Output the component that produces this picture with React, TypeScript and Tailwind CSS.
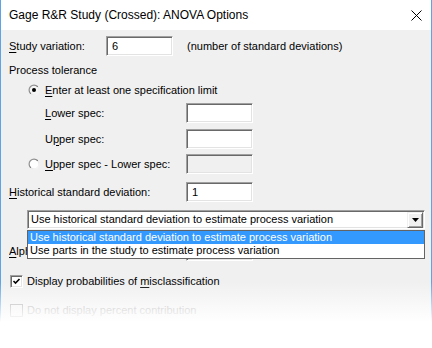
import React from "react";

const font = { fontFamily: '"Liberation Sans", Arial, sans-serif' };

function U({ children }: { children: React.ReactNode }) {
  return <span className="underline underline-offset-[2px] decoration-[1px]">{children}</span>;
}

function Box({ value, disabled }: { value?: string; disabled?: boolean }) {
  return (
    <div
      className={`w-[67px] h-[20px] shrink-0 border border-t-[#a0a0a0] border-l-[#a0a0a0] border-b-white border-r-white shadow-[inset_1px_1px_0_#696969,inset_-1px_-1px_0_#e3e3e3] flex items-center pl-[5px] text-[11px] text-black ${
        disabled ? "bg-[#f0f0f0]" : "bg-white"
      }`}
    >
      {value}
    </div>
  );
}

function Radio({ checked }: { checked?: boolean }) {
  return (
    <svg width="12" height="12" viewBox="0 0 12 12" className="shrink-0">
      <defs>
        <linearGradient id={checked ? "rg1" : "rg2"} x1="0" y1="0" x2="1" y2="1">
          <stop offset="0" stopColor="#a0a0a0" />
          <stop offset="0.5" stopColor="#808080" />
          <stop offset="0.51" stopColor="#e3e3e3" />
          <stop offset="1" stopColor="#ffffff" />
        </linearGradient>
      </defs>
      <circle cx="6" cy="6" r="5.5" fill={`url(#${checked ? "rg1" : "rg2"})`} />
      <circle cx="6" cy="6" r="4.3" fill={checked ? "#f4f4f4" : "#ffffff"} />
      {checked && <circle cx="6" cy="6" r="2" fill="#000" />}
    </svg>
  );
}

function Check() {
  return (
    <div className="w-[13px] h-[13px] bg-white border border-t-[#a0a0a0] border-l-[#a0a0a0] border-b-white border-r-white shadow-[inset_1px_1px_0_#696969,inset_-1px_-1px_0_#e3e3e3] flex items-center justify-center shrink-0">
      <svg width="9" height="9" viewBox="0 0 9 9">
        <path d="M1.5 4 L3.5 6 L7.5 2" stroke="#000" strokeWidth="1.6" fill="none" />
      </svg>
    </div>
  );
}

export default function App() {
  return (
    <div className="relative w-[432px] h-[348px] bg-white overflow-hidden text-black" style={font}>
      <div className="w-[432px] h-[348px] border-x border-[#5ea3e4] flex flex-col">
        {/* Title bar */}
        <div className="h-[30px] bg-white flex items-center justify-between pl-[8px] pr-[9px] shrink-0">
          <span className="text-[12px] leading-none">Gage R&amp;R Study (Crossed): ANOVA Options</span>
          <svg width="11" height="11" viewBox="0 0 11 11" className="mr-[0px]">
            <path d="M0.5 0.5 L10.5 10.5 M10.5 0.5 L0.5 10.5" stroke="#000" strokeWidth="1" />
          </svg>
        </div>
        {/* Body */}
        <div className="flex-1 bg-[#f0f0f0] text-[11px] pl-[8px] flex flex-col">
          <div className="mt-[6px] h-[20px] flex items-center">
            <span className="w-[97px]">
              <U>S</U>tudy variation:
            </span>
            <Box value="6" />
            <span className="ml-[14px]">(number of standard deviations)</span>
          </div>
          <div className="mt-[7px] h-[14px] flex items-center">Process tolerance</div>
          <div className="mt-[6px] h-[14px] flex items-center pl-[19px]">
            <Radio checked />
            <span className="ml-[5px]">
              <U>E</U>nter at least one specification limit
            </span>
          </div>
          <div className="mt-[6px] h-[20px] flex items-center pl-[36px]">
            <span className="w-[141px]">
              <U>L</U>ower spec:
            </span>
            <Box />
          </div>
          <div className="mt-[6px] h-[20px] flex items-center pl-[36px]">
            <span className="w-[141px]">
              U<U>p</U>per spec:
            </span>
            <Box />
          </div>
          <div className="mt-[5px] h-[20px] flex items-center pl-[19px]">
            <Radio />
            <span className="ml-[5px] w-[141px]">
              <U>U</U>pper spec - Lower spec:
            </span>
            <Box disabled />
          </div>
          <div className="mt-[8px] h-[20px] flex items-center">
            <span className="w-[177px]">
              <U>H</U>istorical standard deviation:
            </span>
            <Box value="1" />
          </div>
          <div className="mt-[8px] ml-[18px] w-[398px] h-[19px] bg-white border border-t-[#a0a0a0] border-l-[#a0a0a0] border-b-white border-r-white shadow-[inset_1px_1px_0_#696969,inset_-1px_-1px_0_#e3e3e3] flex items-center justify-between pl-[3px] pr-[1px]">
            <span>Use historical standard deviation to estimate process variation</span>
            <div className="w-[16px] h-[16px] bg-[#f0f0f0] border border-t-[#f0f0f0] border-l-[#f0f0f0] border-b-[#696969] border-r-[#696969] shadow-[inset_1px_1px_0_#ffffff,inset_-1px_-1px_0_#a0a0a0] flex items-center justify-center">
              <svg width="7" height="4" viewBox="0 0 7 4">
                <path d="M0 0 H7 L3.5 4 Z" fill="#000" />
              </svg>
            </div>
          </div>
          <div className="mt-[12px] h-[20px] flex items-center">
            <span className="w-[18px] overflow-hidden whitespace-nowrap">
              <U>A</U>lph
            </span>
            <span className="w-[159px]" />
            <Box />
          </div>
          <div className="mt-[12px] h-[16px] flex items-center pl-[1px]">
            <Check />
            <span className="ml-[4px]">
              Display probabilities of <U>m</U>isclassification
            </span>
          </div>
          <div className="mt-[13px] h-[16px] flex items-center pl-[1px] text-[#a0a0a0]">
            <div className="w-[13px] h-[13px] bg-[#f0f0f0] border border-[#a0a0a0]" />
            <span className="ml-[4px]">Do not display percent contribution</span>
          </div>
        </div>
      </div>

      {/* Dropdown list (open) */}
      <div className="absolute left-[27px] top-[230px] w-[398px] h-[29px] bg-white border border-[#646464] text-[11px] flex flex-col">
        <div className="h-[13px] bg-[#3399ff] text-white flex items-center pl-[2px]">
          Use historical standard deviation to estimate process variation
        </div>
        <div className="h-[13px] flex items-center pl-[2px]">Use parts in the study to estimate process variation</div>
      </div>

      {/* Fade overlay */}
      <div className="absolute left-0 right-0 top-[282px] h-[40px] bg-gradient-to-b from-white/0 to-white pointer-events-none" />
      <div className="absolute left-0 right-0 top-[322px] bottom-0 bg-white" />
    </div>
  );
}
